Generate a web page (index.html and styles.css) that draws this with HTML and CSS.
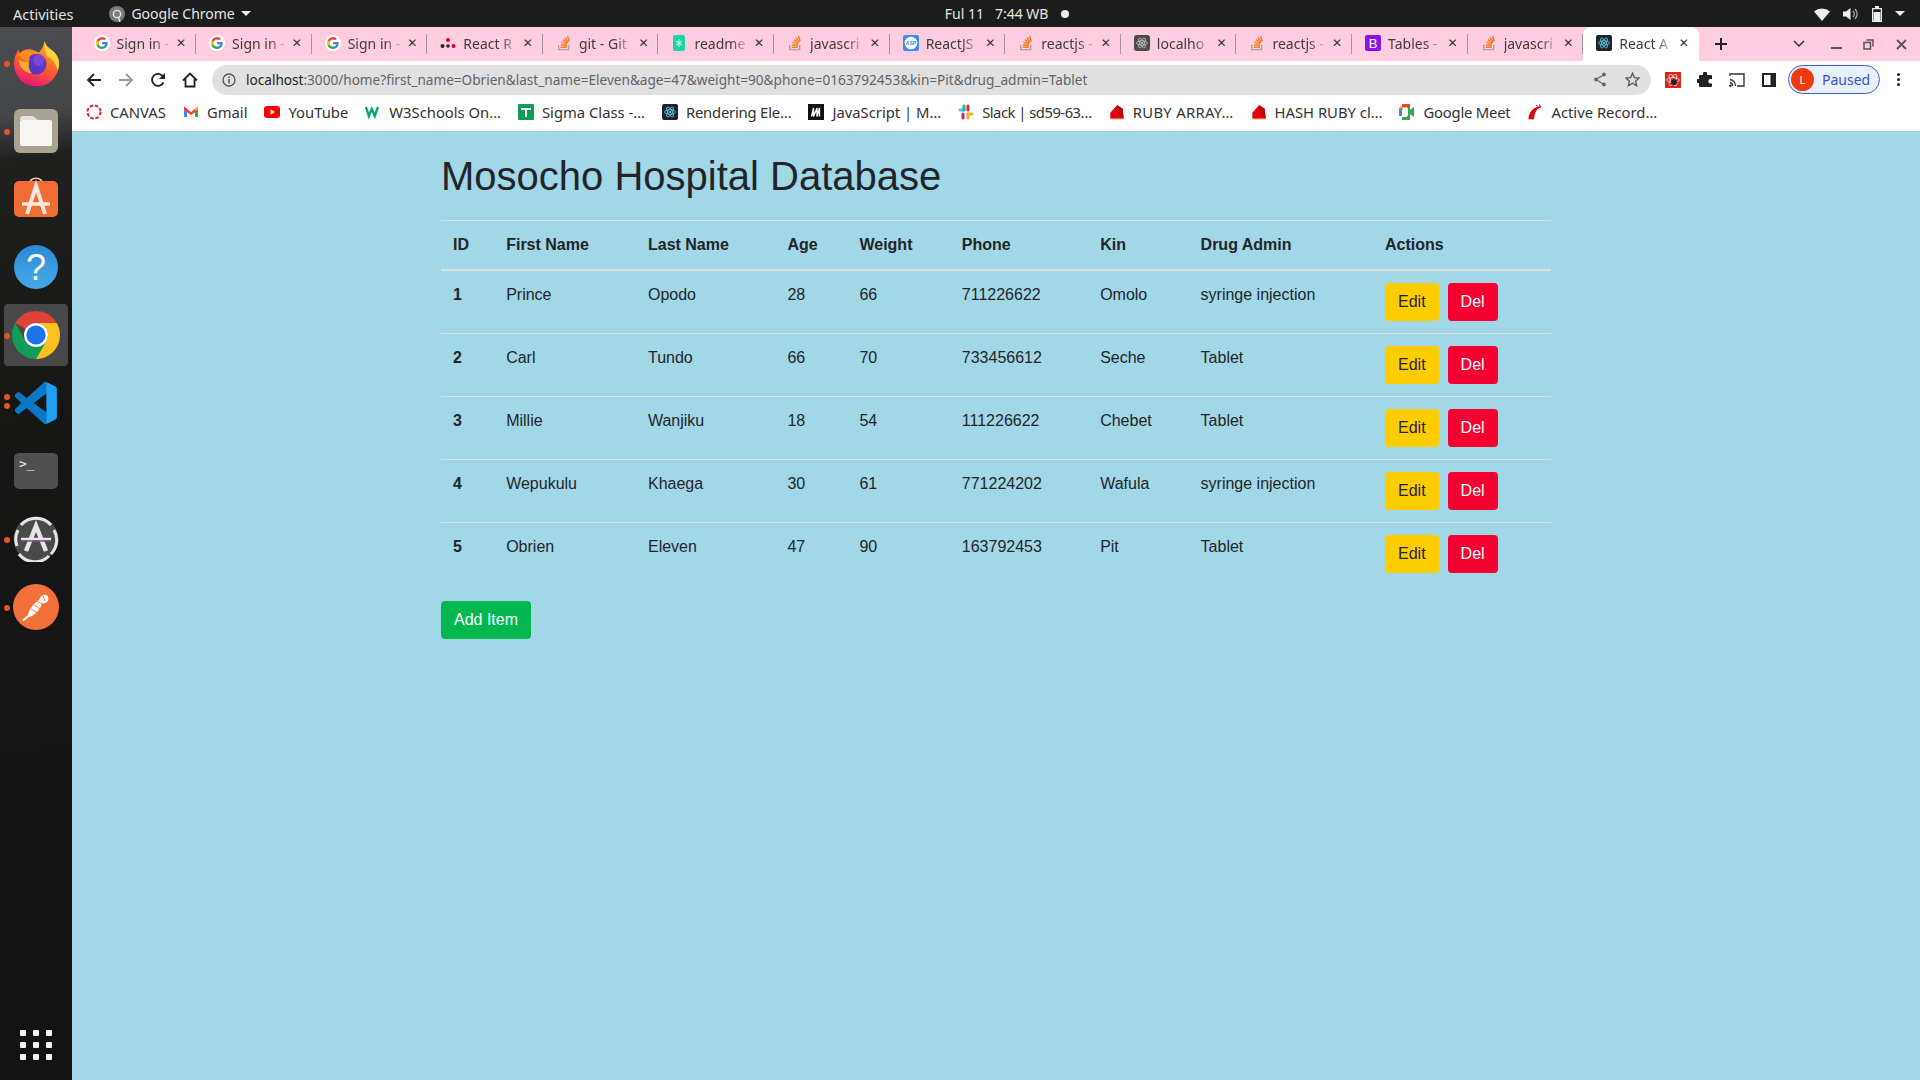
FILE: index.html
```html
<!DOCTYPE html>
<html lang="en">

<head>
    <meta charset="UTF-8">
    <meta name="viewport" content="width=device-width, initial-scale=1.0">
    <title>React App</title>
    <link rel="stylesheet" href="styles.css">
</head>

<body>
    <svg class="sprite" xmlns="http://www.w3.org/2000/svg">
        <symbol id="i-google" viewBox="0 0 24 24">
            <circle cx="12" cy="12" r="12" fill="#fff"/>
            <path fill="#4285f4" d="M20.600 12.200c0-.6-.1-1.200-.2-1.800H12v3.400h4.800a4.100 4.100 0 0 1-1.800 2.700v2.200h2.900c1.700-1.600 2.700-3.900 2.700-6.500z"/>
            <path fill="#34a853" d="M12 21c2.400 0 4.400-.8 5.900-2.200L15 16.500c-.8.500-1.800.9-3 .9-2.300 0-4.300-1.600-5-3.700H4v2.300A9 9 0 0 0 12 21z"/>
            <path fill="#fbbc05" d="M7 13.700a5.400 5.400 0 0 1 0-3.400V8H4a9 9 0 0 0 0 8z"/>
            <path fill="#ea4335" d="M12 6.600c1.300 0 2.500.5 3.400 1.300l2.600-2.600A9 9 0 0 0 4 8l3 2.300c.7-2.100 2.700-3.700 5-3.700z"/>
        </symbol>
        <symbol id="i-so" viewBox="0 0 24 24">
            <path fill="none" stroke="#a7a2a0" stroke-width="2" d="M4 15v7h15v-7"/>
            <path fill="none" stroke="#f48024" stroke-width="2.200" d="M7 18.500h9M7.300 14.700l8.800 1.500M8.300 10.700l8.200 3.400M10.300 7l7 5.200M13.400 3.800l5 7M17.300 1.500l2.500 8"/>
        </symbol>
        <symbol id="i-atom" viewBox="0 0 24 24">
            <g fill="none" stroke="currentColor" stroke-width="1.300">
                <ellipse cx="12" cy="12" rx="9.500" ry="3.800"/>
                <ellipse cx="12" cy="12" rx="9.500" ry="3.800" transform="rotate(60 12 12)"/>
                <ellipse cx="12" cy="12" rx="9.500" ry="3.800" transform="rotate(120 12 12)"/>
            </g>
            <circle cx="12" cy="12" r="1.900" fill="currentColor"/>
        </symbol>
        <symbol id="i-rails" viewBox="0 0 24 24">
            <path fill="#e3000f" d="M2 23c.5-7 3.500-13 9-16.500C14 4.500 18 3 22 3l-1.500 2.500C16 6 11.500 10 10.500 23z"/>
            <path fill="#e3000f" d="M14 1.500l1.500 2M19 .5v2.500" stroke="#e3000f" stroke-width="1.500"/>
        </symbol>
        <symbol id="i-ruby" viewBox="0 0 24 24">
            <path fill="#e3000f" d="M2 13 12 2l2 .5 6.500 4.500 1.500 15H2z"/>
            <path fill="#b90008" d="M12 2l8.500 5L22 22 12 11z"/>
            <path fill="#c9b27c" d="M2 22h20v1.200H2z"/>
        </symbol>
    </svg>

    <header class="topbar">
        <span class="activities">Activities</span>
        <span class="app-menu">
            <svg width="16" height="16" viewBox="0 0 16 16">
                <circle cx="8" cy="8" r="8" fill="#7b7b7b"/>
                <circle cx="8" cy="8" r="3.600" fill="none" stroke="#e8e8e8" stroke-width="1.400"/>
                <path d="M9.500 11l1.500 5" stroke="#e8e8e8" stroke-width="1.400"/>
            </svg>
            Google Chrome
            <i class="caret"></i>
        </span>
        <span class="clock">Ful 11&nbsp;&nbsp;&nbsp;7:44 WB<i class="clock-dot"></i></span>
        <span class="tray">
            <svg width="16" height="14" viewBox="0 0 16 14">
                <path fill="#eee" d="M0 4.500A12 12 0 0 1 16 4.500L8 14z"/>
            </svg>
            <svg width="16" height="14" viewBox="0 0 16 14">
                <path fill="#eee" d="M0 4.500h3L7.500 1v12L3 9.500H0z"/>
                <path fill="none" stroke="#aaa" stroke-width="1.300" d="M10 4a4 4 0 0 1 0 6M12 2a7 7 0 0 1 0 10"/>
            </svg>
            <svg width="10" height="16" viewBox="0 0 10 16">
                <path fill="none" stroke="#eee" stroke-width="1.200" d="M.6 2.600h8.800v12.800H.6z"/>
                <path fill="#eee" d="M3 0h4v2.500H3zM1.500 6h7v9h-7z"/>
            </svg>
            <i class="caret"></i>
        </span>
    </header>

    <div class="desktop">
        <nav class="dock">
            <div class="dock-item">
                <i class="run-dot"></i>
                <svg width="46" height="46" viewBox="0 0 48 48">
                    <defs>
                        <linearGradient id="ff-body" x1="0.700" y1="0" x2="0.300" y2="1">
                            <stop offset="0" stop-color="#ffb21d"/>
                            <stop offset="0.550" stop-color="#ff5a2c"/>
                            <stop offset="1" stop-color="#e3127e"/>
                        </linearGradient>
                    </defs>
                    <path fill="url(#ff-body)" d="M33 1c1 5 4 7 8 10 5 4 7 9 7 14a23.500 23.500 0 0 1-47 0c0-6 2-11 5-15 0 3 1 5 3 6 2-3 6-5 10-5 3 0 6 1 8 2 3-3 5-7 6-12z"/>
                    <path fill="#ffd43b" d="M33 1c1 5 4 7 8 10 5 4 7 9 7 14 0 3-.6 5-1.500 7-1-7-5-12-11-15-2-5-3-10-2.500-16z"/>
                    <circle cx="24" cy="25" r="11" fill="#5b38c4"/>
                    <circle cx="27" cy="21" r="6" fill="#8a4fe0" opacity="0.700"/>
                    <path fill="#ff8a1f" d="M5 16c4-5 9-7 14-6 4 1 7 3 8 5-5-1-8 0-10 3 1 3 0 5-3 6-3-4-6-6-9-8z"/>
                    <path fill="#ffb52b" d="M6 20c3 2 7 4 11 3-1 4-1 8 3 12-8-1-14-7-14-15z" opacity="0.900"/>
                </svg>
            </div>
            <div class="dock-item">
                <i class="run-dot"></i>
                <svg width="44" height="44" viewBox="0 0 44 44">
                    <rect width="44" height="44" rx="6" fill="#a8a392"/>
                    <path fill="#e4e2dc" d="M6 10a3 3 0 0 1 3-3h10l5 4H6z"/>
                    <rect x="6" y="11" width="32" height="26" rx="2" fill="#f7f6f4"/>
                </svg>
            </div>
            <div class="dock-item">
                <svg width="44" height="48" viewBox="0 0 44 48">
                    <path fill="none" stroke="#e9d6b4" stroke-width="1.600" d="M15 10c0-9 14-9 14 0"/>
                    <rect y="6" width="44" height="36" rx="5" fill="#f26d33"/>
                    <path fill="none" stroke="#fbe9e0" stroke-width="4" d="M13 39 22 11l9 28"/>
                    <path fill="none" stroke="#fbe9e0" stroke-width="3.500" d="M8 29h28"/>
                </svg>
            </div>
            <div class="dock-item">
                <svg width="44" height="44" viewBox="0 0 44 44">
                    <defs>
                        <linearGradient id="help-bg" x1="0" y1="0" x2="0" y2="1">
                            <stop offset="0" stop-color="#2a8ad8"/>
                            <stop offset="1" stop-color="#47a9e6"/>
                        </linearGradient>
                    </defs>
                    <circle cx="22" cy="22" r="22" fill="url(#help-bg)"/>
                    <text class="dock-help" x="22" y="35" text-anchor="middle">?</text>
                </svg>
            </div>
            <div class="dock-item dock-item-active">
                <i class="run-dot"></i>
                <svg width="48" height="48" viewBox="4 4 40 40">
                    <path fill="#db4437" d="M24 4A20 20 0 0 1 41.300 14H24A10 10 0 0 0 15.340 19L6.700 14A20 20 0 0 1 24 4z"/>
                    <path fill="#0f9d58" d="M6.700 14A20 20 0 0 0 24 44L32.660 29A10 10 0 0 1 15.340 29z"/>
                    <path fill="#fcc21b" d="M41.300 14H24A10 10 0 0 1 32.660 29L24 44A20 20 0 0 0 41.300 14z"/>
                    <circle cx="24" cy="24" r="10" fill="#fff"/>
                    <circle cx="24" cy="24" r="8" fill="#1a73e8"/>
                </svg>
            </div>
            <div class="dock-item">
                <i class="run-dot run-dot-upper"></i>
                <i class="run-dot run-dot-lower"></i>
                <svg width="42" height="42" viewBox="0 0 100 100">
                    <path fill="#0a78c2" d="M96 10.800 75 .7a6 6 0 0 0-7 1.200L28 38 10.700 24.800a4 4 0 0 0-5 .2L.2 30a4 4 0 0 0 0 6L15.200 50 .2 64a4 4 0 0 0 0 6l5.500 5a4 4 0 0 0 5 .2L28 62l40 36.100a6 6 0 0 0 7 1.200l21-10.100a6 6 0 0 0 3.400-5.400V16.200A6 6 0 0 0 96 10.800zM75 72.700 44.600 50 75 27.300z"/>
                    <path fill="#20a0f2" d="M68 2a6 6 0 0 1 7-1.300L96 10.800a6 6 0 0 1 3.400 5.400v67.600a6 6 0 0 1-3.400 5.400L75 99.300a6 6 0 0 1-7-1.200 3.500 3.500 0 0 0 7-2.500V4.400A3.500 3.500 0 0 0 68 2z"/>
                </svg>
            </div>
            <div class="dock-item">
                <svg width="44" height="36" viewBox="0 0 44 36">
                    <rect width="44" height="36" rx="5" fill="#4f4f4f"/>
                    <text class="dock-term" x="5" y="15">&gt;_</text>
                </svg>
            </div>
            <div class="dock-item">
                <i class="run-dot"></i>
                <svg width="46" height="46" viewBox="0 0 46 46">
                    <circle cx="23" cy="23" r="22.500" fill="#4a4a4a"/>
                    <path fill="none" stroke="#e6e6e6" stroke-width="3" d="M8 9A20 20 0 0 1 38 9M41 14a20 20 0 0 1-3 24M36 40a20 20 0 0 1-30-2M4 30A20 20 0 0 1 5 14"/>
                    <path fill="none" stroke="#e6e6e6" stroke-width="4.500" d="M13 35 23 10l10 25"/>
                    <path stroke="#e6e6e6" stroke-width="2.500" d="M8 23h30"/>
                    <path stroke="#7d4d86" stroke-width="1.500" d="M9 25h28"/>
                </svg>
            </div>
            <div class="dock-item">
                <i class="run-dot"></i>
                <svg width="46" height="46" viewBox="0 0 46 46">
                    <circle cx="23" cy="23" r="23" fill="#f4703a"/>
                    <path fill="#fff" d="M9 36l6-5c1-5 5-11 11-15 1-3 4-6 7-5 3 1 3 5 1 7-2 1-3 2-5 1-1 5-5 10-10 13l-3 1-5 4z"/>
                    <path fill="none" stroke="#f4703a" stroke-width="0.900" d="M18 25l8 5M21 21l8 5M24 17l6 4M30 12l2 5"/>
                </svg>
            </div>
            <div class="dock-apps">
                <i></i><i></i><i></i><i></i><i></i><i></i><i></i><i></i><i></i>
            </div>
        </nav>

        <div class="browser">
            <div class="tabstrip">
                <div class="tab"><svg class="favicon"><use href="#i-google"/></svg><span class="tab-title">Sign in -</span><span class="tab-close">✕</span></div>
                <div class="tab"><svg class="favicon"><use href="#i-google"/></svg><span class="tab-title">Sign in -</span><span class="tab-close">✕</span></div>
                <div class="tab"><svg class="favicon"><use href="#i-google"/></svg><span class="tab-title">Sign in -</span><span class="tab-close">✕</span></div>
                <div class="tab">
                    <svg class="favicon" viewBox="0 0 16 16"><circle cx="2.500" cy="11" r="2" fill="#222"/><circle cx="8" cy="5" r="2" fill="#d0021b"/><circle cx="8" cy="11" r="1.800" fill="#222"/><circle cx="13.500" cy="11" r="2" fill="#d0021b"/></svg>
                    <span class="tab-title">React R</span><span class="tab-close">✕</span>
                </div>
                <div class="tab"><svg class="favicon"><use href="#i-so"/></svg><span class="tab-title">git - Git</span><span class="tab-close">✕</span></div>
                <div class="tab">
                    <svg class="favicon" viewBox="0 0 16 16"><rect x="2" width="12" height="16" rx="2" fill="#19d3a2"/><path d="M8 4v8M5 6l6 4M11 6l-6 4" stroke="#b5f5e2" stroke-width="1.200"/></svg>
                    <span class="tab-title">readme</span><span class="tab-close">✕</span>
                </div>
                <div class="tab"><svg class="favicon"><use href="#i-so"/></svg><span class="tab-title">javascri</span><span class="tab-close">✕</span></div>
                <div class="tab">
                    <svg class="favicon" viewBox="0 0 16 16"><rect width="16" height="16" rx="2" fill="#3a8cf0"/><circle cx="8" cy="8" r="6.300" fill="#fff"/><text class="favicon-asp" x="8" y="9.700" text-anchor="middle">ASP</text></svg>
                    <span class="tab-title">ReactJS</span><span class="tab-close">✕</span>
                </div>
                <div class="tab"><svg class="favicon"><use href="#i-so"/></svg><span class="tab-title">reactjs -</span><span class="tab-close">✕</span></div>
                <div class="tab">
                    <svg class="favicon favicon-local" viewBox="0 0 16 16"><rect width="16" height="16" rx="3" fill="#4a4a4a"/><svg x="1" y="1" width="14" height="14" viewBox="0 0 24 24"><use href="#i-atom"/></svg></svg>
                    <span class="tab-title">localho</span><span class="tab-close">✕</span>
                </div>
                <div class="tab"><svg class="favicon"><use href="#i-so"/></svg><span class="tab-title">reactjs -</span><span class="tab-close">✕</span></div>
                <div class="tab">
                    <svg class="favicon" viewBox="0 0 16 16"><rect width="16" height="16" rx="2" fill="#8b13e6"/><text class="favicon-b" x="8" y="12.500" text-anchor="middle">B</text></svg>
                    <span class="tab-title">Tables -</span><span class="tab-close">✕</span>
                </div>
                <div class="tab"><svg class="favicon"><use href="#i-so"/></svg><span class="tab-title">javascri</span><span class="tab-close">✕</span></div>
                <div class="tab tab-active">
                    <svg class="favicon favicon-react" viewBox="0 0 16 16"><rect width="16" height="16" rx="2" fill="#20232a"/><svg x="1" y="1" width="14" height="14" viewBox="0 0 24 24"><use href="#i-atom"/></svg></svg>
                    <span class="tab-title">React A</span><span class="tab-close">✕</span>
                </div>
                <span class="tab-new">
                    <svg width="14" height="14" viewBox="0 0 14 14"><path stroke="#222" stroke-width="2" d="M7 1v12M1 7h12"/></svg>
                </span>
                <span class="window-controls">
                    <svg width="12" height="8" viewBox="0 0 12 8"><path fill="none" stroke="#333" stroke-width="1.500" d="M1 1l5 5 5-5"/></svg>
                    <svg class="win-min" width="11" height="10" viewBox="0 0 11 10"><path stroke="#555" stroke-width="2" d="M0 9h11"/></svg>
                    <svg class="win-max" width="11" height="11" viewBox="0 0 11 11"><path fill="none" stroke="#555" stroke-width="1.500" d="M3.500 1h6.500v6.500M1 3.500h6.500V10H1z"/></svg>
                    <svg class="win-close" width="11" height="11" viewBox="0 0 11 11"><path stroke="#555" stroke-width="1.800" d="M1 1l9 9M10 1l-9 9"/></svg>
                </span>
            </div>

            <div class="toolbar">
                <span class="nav-btn">
                    <svg width="16" height="16" viewBox="0 0 16 16"><path fill="none" stroke="#222" stroke-width="1.800" d="M15 8H2M8 2 2 8l6 6"/></svg>
                </span>
                <span class="nav-btn">
                    <svg width="16" height="16" viewBox="0 0 16 16"><path fill="none" stroke="#9a9a9a" stroke-width="1.800" d="M1 8h13M8 2l6 6-6 6"/></svg>
                </span>
                <span class="nav-btn">
                    <svg width="16" height="16" viewBox="0 0 16 16"><path fill="none" stroke="#222" stroke-width="1.800" d="M13.500 10.500A6 6 0 1 1 13 4.500"/><path fill="#222" d="M15 1v6H9z"/></svg>
                </span>
                <span class="nav-btn">
                    <svg width="16" height="16" viewBox="0 0 16 16"><path fill="none" stroke="#222" stroke-width="1.800" d="M1 8.500 8 1.500l7 7M3.500 7v7.500h9V7"/></svg>
                </span>
                <div class="omnibox">
                    <svg class="omni-info" width="14" height="14" viewBox="0 0 14 14"><circle cx="7" cy="7" r="6" fill="none" stroke="#555" stroke-width="1.300"/><path stroke="#555" stroke-width="1.500" d="M7 6v4.500M7 3.500v1.500"/></svg>
                    <span class="omni-url"><b>localhost</b>:3000/home?first_name=Obrien&amp;last_name=Eleven&amp;age=47&amp;weight=90&amp;phone=0163792453&amp;kin=Pit&amp;drug_admin=Tablet</span>
                    <svg class="omni-share" width="14" height="15" viewBox="0 0 14 15"><path fill="none" stroke="#666" stroke-width="1.200" d="M11 2.500 3 7.500l8 5"/><circle cx="11" cy="2.500" r="1.900" fill="#666"/><circle cx="3" cy="7.500" r="1.900" fill="#666"/><circle cx="11" cy="12.500" r="1.900" fill="#666"/></svg>
                    <svg class="omni-star" width="15" height="15" viewBox="0 0 15 15"><path fill="none" stroke="#555" stroke-width="1.300" d="M7.500 1.300 9.400 5.600l4.600.5-3.400 3.100 1 4.500-4.100-2.400-4.100 2.400 1-4.500L1 6.100l4.600-.5z"/></svg>
                </div>
                <span class="tool-btn">
                    <svg width="16" height="16" viewBox="0 0 16 16"><rect width="16" height="16" fill="#d9261c"/><g color="#ffd0c8"><use href="#i-atom" width="16" height="16"/></g><circle cx="9" cy="10" r="3" fill="#222"/></svg>
                </span>
                <span class="tool-btn">
                    <svg width="16" height="16" viewBox="0 0 16 16"><path fill="#222" d="M6 1.500a2 2 0 0 1 4 0V3h4a1 1 0 0 1 1 1v3h-1.500a2.200 2.200 0 0 0 0 4.400H15V14a1 1 0 0 1-1 1H3a1 1 0 0 1-1-1v-3H1a2 2 0 0 1 0-4h1V4a1 1 0 0 1 1-1h3z"/></svg>
                </span>
                <span class="tool-btn">
                    <svg width="16" height="14" viewBox="0 0 16 14"><path fill="none" stroke="#333" stroke-width="1.400" d="M1 3V1h14v12H8M1 6.500A6.500 6.500 0 0 1 6.500 13M1 9.500A3.500 3.500 0 0 1 3.500 13"/><circle cx="1.300" cy="12.700" r="1.200" fill="#333"/></svg>
                </span>
                <span class="tool-btn">
                    <svg width="14" height="14" viewBox="0 0 14 14"><path fill="#222" d="M0 0h14v14H0z"/><path fill="#fff" d="M2 2h6.500v10H2z"/></svg>
                </span>
                <span class="profile-chip"><i class="avatar">L</i>Paused</span>
                <span class="kebab"><i></i><i></i><i></i></span>
            </div>

            <div class="bookmarks">
                <span class="bookmark">
                    <svg class="favicon" viewBox="0 0 16 16"><circle cx="8" cy="8" r="6.500" fill="none" stroke="#e3262e" stroke-width="2" stroke-dasharray="3.500 1.600"/></svg>CANVAS
                </span>
                <span class="bookmark">
                    <svg class="favicon" viewBox="0 0 16 16"><path fill="#4285f4" d="M1 4h3v9H1z"/><path fill="#34a853" d="M12 4h3v9h-3z"/><path fill="#ea4335" d="M1 2.500l7 5.500 7-5.500V6L8 11 1 6z"/><path fill="#fbbc05" d="M12 4l3-1.500V5l-3 2z"/></svg>Gmail
                </span>
                <span class="bookmark">
                    <svg class="favicon" viewBox="0 0 16 16"><rect y="2" width="16" height="12" rx="3" fill="#f00"/><path fill="#fff" d="M6.500 5.300 11 8l-4.500 2.700z"/></svg>YouTube
                </span>
                <span class="bookmark">
                    <svg class="favicon" viewBox="0 0 16 16"><path fill="none" stroke="#04aa6d" stroke-width="2.400" d="M1 3l2.800 9 3-7 3 7L13 3"/></svg>W3Schools On…
                </span>
                <span class="bookmark">
                    <svg class="favicon" viewBox="0 0 16 16"><rect width="16" height="16" rx="1" fill="#0f9d58"/><path stroke="#fff" stroke-width="2" d="M3 5h10M8 5v8"/></svg>Sigma Class -…
                </span>
                <span class="bookmark bookmark-snug">
                    <svg class="favicon favicon-react" viewBox="0 0 16 16"><rect width="16" height="16" rx="2" fill="#20232a"/><svg x="1" y="1" width="14" height="14" viewBox="0 0 24 24"><use href="#i-atom"/></svg></svg>Rendering Ele…
                </span>
                <span class="bookmark">
                    <svg class="favicon" viewBox="0 0 16 16"><rect width="16" height="16" fill="#111"/><path fill="none" stroke="#fff" stroke-width="1.400" d="M3.500 12.500 5.500 4v8.500L9 4v8.500L11.500 4v8.500"/></svg>JavaScript | M…
                </span>
                <span class="bookmark bookmark-tight">
                    <svg class="favicon" viewBox="0 0 16 16"><path stroke="#36c5f0" stroke-width="3" stroke-linecap="round" d="M2 6h4"/><path stroke="#e01e5a" stroke-width="3" stroke-linecap="round" d="M5 10v4"/><path stroke="#2eb67d" stroke-width="3" stroke-linecap="round" d="M6 2v4"/><path stroke="#ecb22e" stroke-width="3" stroke-linecap="round" d="M10 10h4"/><path stroke="#e01e5a" stroke-width="3" stroke-linecap="round" d="M10 2v4"/><path stroke="#ecb22e" stroke-width="3" stroke-linecap="round" d="M10 10v4"/></svg>Slack | sd59-63…
                </span>
                <span class="bookmark bookmark-wide">
                    <svg class="favicon"><use href="#i-ruby"/></svg>RUBY ARRAY…
                </span>
                <span class="bookmark">
                    <svg class="favicon"><use href="#i-ruby"/></svg>HASH RUBY cl…
                </span>
                <span class="bookmark bookmark-snug">
                    <svg class="favicon" viewBox="0 0 16 16"><path fill="#fbbc05" d="M1 2h6v4H1z"/><path fill="#ea4335" d="M3 0h8v3H3z"/><path fill="#4285f4" d="M0 4h3v8H0z"/><path fill="#34a853" d="M3 13h8v3H3zM11 3v3l4-3v10l-4-3v3H8V3z"/><path fill="#fff" d="M4 4h5v8H4z"/></svg>Google Meet
                </span>
                <span class="bookmark">
                    <svg class="favicon"><use href="#i-rails"/></svg>Active Record…
                </span>
            </div>

            <main class="page">
                <div class="container">
                    <h1>Mosocho Hospital Database</h1>
                    <table class="table">
                        <thead>
                            <tr>
                                <th>ID</th>
                                <th>First Name</th>
                                <th>Last Name</th>
                                <th>Age</th>
                                <th>Weight</th>
                                <th>Phone</th>
                                <th>Kin</th>
                                <th>Drug Admin</th>
                                <th class="col-actions">Actions</th>
                            </tr>
                        </thead>
                        <tbody>
                            <tr>
                                <th>1</th>
                                <td>Prince</td>
                                <td>Opodo</td>
                                <td>28</td>
                                <td>66</td>
                                <td>711226622</td>
                                <td>Omolo</td>
                                <td>syringe injection</td>
                                <td><button class="btn btn-edit">Edit</button><button class="btn btn-del">Del</button></td>
                            </tr>
                            <tr>
                                <th>2</th>
                                <td>Carl</td>
                                <td>Tundo</td>
                                <td>66</td>
                                <td>70</td>
                                <td>733456612</td>
                                <td>Seche</td>
                                <td>Tablet</td>
                                <td><button class="btn btn-edit">Edit</button><button class="btn btn-del">Del</button></td>
                            </tr>
                            <tr>
                                <th>3</th>
                                <td>Millie</td>
                                <td>Wanjiku</td>
                                <td>18</td>
                                <td>54</td>
                                <td>111226622</td>
                                <td>Chebet</td>
                                <td>Tablet</td>
                                <td><button class="btn btn-edit">Edit</button><button class="btn btn-del">Del</button></td>
                            </tr>
                            <tr>
                                <th>4</th>
                                <td>Wepukulu</td>
                                <td>Khaega</td>
                                <td>30</td>
                                <td>61</td>
                                <td>771224202</td>
                                <td>Wafula</td>
                                <td>syringe injection</td>
                                <td><button class="btn btn-edit">Edit</button><button class="btn btn-del">Del</button></td>
                            </tr>
                            <tr>
                                <th>5</th>
                                <td>Obrien</td>
                                <td>Eleven</td>
                                <td>47</td>
                                <td>90</td>
                                <td>163792453</td>
                                <td>Pit</td>
                                <td>Tablet</td>
                                <td><button class="btn btn-edit">Edit</button><button class="btn btn-del">Del</button></td>
                            </tr>
                        </tbody>
                    </table>
                    <button class="btn btn-add">Add Item</button>
                </div>
            </main>
        </div>
    </div>
</body>

</html>
```
FILE: styles.css
```css
* {
    box-sizing: border-box;
}

body {
    margin: 0;
    height: 100vh;
    overflow: hidden;
    display: flex;
    flex-direction: column;
    background: #161616;
    font-family: 'Noto Sans', sans-serif;
}

.sprite {
    display: none;
}

i {
    font-style: normal;
}

/* gnome top bar */
.topbar {
    height: 27px;
    flex: none;
    display: flex;
    align-items: center;
    background: #1c1c1c;
    color: #e6e6e6;
    font-size: 14px;
}

.activities {
    margin-left: 13px;
    font-size: 14.500px;
}

.app-menu {
    margin-left: 36px;
    display: flex;
    align-items: center;
    gap: 6px;
}

.caret {
    width: 0;
    height: 0;
    border-left: 5px solid transparent;
    border-right: 5px solid transparent;
    border-top: 5px solid #eee;
}

.clock {
    margin-left: 694px;
    display: flex;
    align-items: center;
}

.clock-dot {
    width: 8px;
    height: 8px;
    margin-left: 13px;
    border-radius: 50%;
    background: #eee;
}

.tray {
    margin-left: auto;
    margin-right: 15px;
    display: flex;
    align-items: center;
    gap: 13px;
}

/* desktop */
.desktop {
    flex: 1;
    display: flex;
    min-height: 0;
}

.dock {
    width: 72px;
    flex: none;
    display: flex;
    flex-direction: column;
    padding: 2px 0;
    background: linear-gradient(172deg, #4b4c50 0, #444549 90px, #1f1f1d 135px, #161615 400px, #131313 100%);
}

.dock-item {
    position: relative;
    height: 68px;
    flex: none;
    display: flex;
    align-items: center;
    justify-content: center;
}

.dock-item-active {
    height: 62px;
    margin: 3px 4px;
    background: #48484a;
    border-radius: 4px;
}

.run-dot {
    position: absolute;
    left: 4px;
    top: 32px;
    width: 6px;
    height: 6px;
    border-radius: 50%;
    background: #e95420;
}

.dock-item-active .run-dot {
    left: 0;
    top: 29px;
}

.run-dot-upper {
    top: 25px;
}

.run-dot-lower {
    top: 34px;
}

.dock-help {
    font-family: 'Liberation Sans', sans-serif;
    font-size: 36px;
    fill: #fff;
}

.dock-term {
    font-family: 'DejaVu Sans Mono', monospace;
    font-size: 13px;
    fill: #eee;
}

.dock-apps {
    margin: auto auto 18px;
    width: 32px;
    display: grid;
    grid-template-columns: repeat(3, 6px);
    justify-content: space-between;
    row-gap: 6px;
}

.dock-apps i {
    width: 6px;
    height: 6px;
    background: #f2f2f2;
    border-radius: 1px;
}

/* chrome window */
.browser {
    flex: 1;
    min-width: 0;
    display: flex;
    flex-direction: column;
}

.tabstrip {
    height: 34px;
    flex: none;
    display: flex;
    align-items: stretch;
    padding-left: 8.500px;
    background: #ffcce0;
}

.tab {
    position: relative;
    width: 115.600px;
    flex: none;
    display: flex;
    align-items: center;
    padding: 0 7px 2px 13px;
    color: #3c3c3c;
    font-size: 14px;
}

.tab::after {
    content: "";
    position: absolute;
    right: 0;
    top: 7px;
    height: 20px;
    width: 1px;
    background: #a5929b;
}

.tab-active {
    background: #fff;
    border-radius: 8px 8px 0 0;
}

.tab-active::after,
.tab:nth-last-child(3)::after {
    display: none;
}

.favicon {
    width: 16px;
    height: 16px;
    flex: none;
}

.favicon-react {
    color: #61dafb;
}

.favicon-local {
    color: #c9c9c9;
}

.favicon-asp {
    font-family: 'Liberation Sans', sans-serif;
    font-size: 5px;
    font-weight: bold;
    fill: #2f7fe0;
}

.favicon-b {
    font-family: 'Liberation Sans', sans-serif;
    font-size: 13px;
    fill: #fff;
}

.tab-title {
    flex: 1;
    min-width: 0;
    margin-left: 7px;
    white-space: nowrap;
    overflow: hidden;
    -webkit-mask-image: linear-gradient(to right, #000 65%, transparent 98%);
    mask-image: linear-gradient(to right, #000 65%, transparent 98%);
}

.tab-close {
    width: 16px;
    flex: none;
    text-align: center;
    color: #333;
    font-family: 'DejaVu Sans', sans-serif;
    font-size: 12px;
}

.tab-new {
    margin-left: 15px;
    display: flex;
    align-items: center;
}

.window-controls {
    flex: 1;
    display: flex;
    align-items: center;
    padding-left: 65px;
}

.win-min {
    margin-left: 26px;
}

.win-max {
    margin-left: 21px;
}

.win-close {
    margin-left: 22px;
}

.toolbar {
    height: 37px;
    flex: none;
    display: flex;
    align-items: center;
    padding-left: 6px;
    background: #fff;
}

.nav-btn,
.tool-btn {
    width: 32px;
    flex: none;
    display: flex;
    justify-content: center;
}

.omnibox {
    width: 1439px;
    height: 30px;
    flex: none;
    margin: 0 6px;
    display: flex;
    align-items: center;
    padding: 0 11px 0 10px;
    border-radius: 15px;
    background: #e0e0e0;
    color: #5f6368;
    font-size: 13.600px;
}

.omni-url {
    margin-left: 10px;
    white-space: nowrap;
}

.omni-url b {
    font-weight: normal;
    color: #222;
}

.omni-share {
    margin-left: auto;
}

.omni-star {
    margin-left: 18px;
}

.profile-chip {
    width: 92px;
    height: 29px;
    flex: none;
    margin-left: 3px;
    display: flex;
    align-items: center;
    gap: 8px;
    padding-left: 2px;
    border: 1px solid #3f5bd9;
    border-radius: 15px;
    background: #e8effd;
    color: #3a52c8;
    font-size: 14px;
}

.avatar {
    width: 23px;
    height: 23px;
    display: flex;
    align-items: center;
    justify-content: center;
    border-radius: 50%;
    background: #f03a0c;
    color: #fff;
    font-size: 11px;
}

.kebab {
    flex: 1;
    display: flex;
    flex-direction: column;
    align-items: center;
    gap: 2px;
    padding-right: 3px;
}

.kebab i {
    width: 3px;
    height: 3px;
    border-radius: 50%;
    background: #222;
}

.bookmarks {
    height: 33px;
    flex: none;
    display: flex;
    align-items: center;
    padding: 0 0 5px 14px;
    gap: 17px;
    background: #fff;
    color: #333;
    font-size: 14.800px;
}

.bookmark {
    flex: none;
    display: flex;
    align-items: center;
    gap: 8px;
    white-space: nowrap;
}

.bookmark-tight {
    letter-spacing: -0.500px;
}

.bookmark-snug {
    letter-spacing: -0.200px;
}

.bookmark-wide {
    letter-spacing: 0.300px;
}

/* the page itself */
.page {
    flex: 1;
    background: #a2d7e8;
    color: #212529;
    font-family: 'Liberation Sans', sans-serif;
    font-size: 16px;
    line-height: 1.5;
}

.container {
    width: 1140px;
    margin: 0 auto;
    padding: 21px 15px 0;
}

h1 {
    margin: 0 0 20px;
    font-size: 40px;
    font-weight: 500;
    line-height: 1.2;
}

.table {
    width: 100%;
    margin-bottom: 16px;
    border-collapse: collapse;
}

.table th,
.table td {
    padding: 12px;
    text-align: left;
    vertical-align: top;
    border-top: 1px solid #dee2e6;
}

.table thead th {
    border-bottom: 2px solid #dee2e6;
}

.col-actions {
    width: 178px;
}

.btn {
    height: 38px;
    padding: 6px 12px;
    border: 1px solid transparent;
    border-radius: 4px;
    font-family: inherit;
    font-size: 16px;
    line-height: 1.5;
}

.btn-edit {
    margin-right: 9px;
    background: #ffcc00;
    color: #212529;
}

.btn-del {
    background: #f50031;
    color: #fff;
}

.btn-add {
    background: #00b84f;
    color: #fff;
}
```
